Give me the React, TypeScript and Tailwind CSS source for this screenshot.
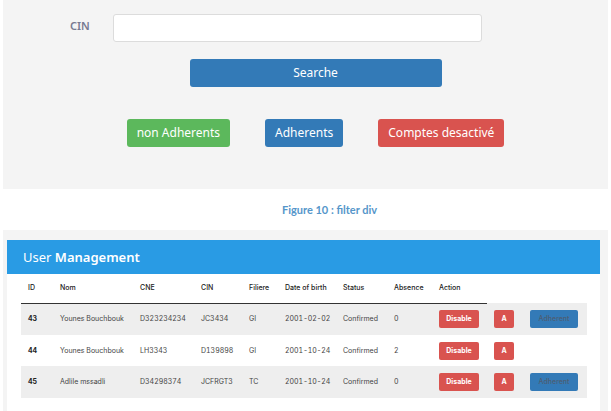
type User = {
  id: number;
  nom: string;
  cne: string;
  cin: string;
  filiere: string;
  birth: string;
  absence: number;
  adherent: boolean;
};

const users: User[] = [
  { id: 43, nom: "Younes Bouchbouk", cne: "D323234234", cin: "JC3434", filiere: "GI", birth: "2001-02-02", absence: 0, adherent: true },
  { id: 44, nom: "Younes Bouchbouk", cne: "LH3343", cin: "D139898", filiere: "GI", birth: "2001-10-24", absence: 2, adherent: false },
  { id: 45, nom: "Adlile mssadli", cne: "D34298374", cin: "JCFRGT3", filiere: "TC", birth: "2001-10-24", absence: 0, adherent: true },
];

const headings = ["ID", "Nom", "CNE", "CIN", "Filiere", "Date of birth", "Status", "Absence", "Action"];

const columns = [
  "w-[32px]", "w-[80px]", "w-[61px]", "w-[48px]", "w-[36px]", "w-[58px]",
  "w-[51px]", "w-[45px]", "w-[55px]", "w-[36px]", "w-[64px]",
];

const filterButton = "h-7 rounded-[3px] px-[10px] pb-px text-[12px] leading-5 text-white whitespace-nowrap";
const rowButton = "block h-[18px] rounded-[2px] text-[7px] leading-[18px]";

function FilterPanel() {
  return (
    <section className="bg-[#f4f4f4] px-5 pt-[14px] pb-[42px]">
      <form onSubmit={(e) => e.preventDefault()}>
        <div className="flex items-center pr-[106px] pl-[47px]">
          <label htmlFor="cin" className="w-[43px] pb-1 text-[11px] leading-4 font-semibold text-[#777a91]">
            CIN
          </label>
          <input
            id="cin"
            type="text"
            className="h-7 min-w-0 flex-1 rounded-[3px] border border-[#dcdcdc] bg-white px-2 text-[12px] outline-none"
          />
        </div>
        <div className="mt-[17px] flex justify-center pl-5">
          <button type="submit" className="h-7 w-[252px] rounded-[3px] bg-[#337ab7] pb-px text-[12px] leading-5 text-white">
            Searche
          </button>
        </div>
      </form>
      <div className="mt-8 flex justify-center gap-[35px] pl-5">
        <button type="button" className={`${filterButton} bg-[#5cb85c]`}>non Adherents</button>
        <button type="button" className={`${filterButton} bg-[#337ab7]`}>Adherents</button>
        <button type="button" className={`${filterButton} bg-[#d9534f]`}>Comptes desactivé</button>
      </div>
    </section>
  );
}

function UserTable() {
  return (
    <table className="w-full table-fixed border-collapse text-left font-[Inter,sans-serif] text-[7px] leading-3 whitespace-nowrap tabular-nums">
      <colgroup>
        {columns.map((width, i) => (
          <col key={i} className={width} />
        ))}
      </colgroup>
      <thead>
        <tr className="h-[29px] text-[#222]">
          {headings.map((heading) => (
            <th key={heading} scope="col" className="border-b border-[#333] px-[7px] font-medium">
              {heading}
            </th>
          ))}
        </tr>
      </thead>
      <tbody className="text-[#444]">
        {users.map((user) => (
          <tr key={user.id} className="h-8 odd:bg-[#eee] even:h-[31px]">
            <th scope="row" className="px-[7px] font-bold text-[#222]">{user.id}</th>
            <td className="px-[7px]">{user.nom}</td>
            <td className="px-[7px]">{user.cne}</td>
            <td className="px-[7px]">{user.cin}</td>
            <td className="px-[7px]">{user.filiere}</td>
            <td className="px-[7px]">{user.birth}</td>
            <td className="px-[7px]">Confirmed</td>
            <td className="px-[7px]">{user.absence}</td>
            <td className="px-[7px]">
              <button type="button" className={`${rowButton} w-10 bg-[#d9534f] font-bold text-white`}>Disable</button>
            </td>
            <td className="px-[7px]">
              <button type="button" className={`${rowButton} w-5 bg-[#d9534f] font-bold text-white`}>A</button>
            </td>
            <td className="px-[7px]">
              {user.adherent && (
                <button type="button" className={`${rowButton} w-12 bg-[#337ab7] font-medium text-[#4c5e74]`}>Adherent</button>
              )}
            </td>
          </tr>
        ))}
      </tbody>
    </table>
  );
}

export default function App() {
  return (
    <main className="min-h-screen bg-white px-[3px] font-['Noto_Sans',sans-serif]">
      <FilterPanel />
      <p className="pt-[13px] pb-3 pl-12 text-center font-[Lato,sans-serif] text-[11px] leading-4 font-bold text-[#5596ca]">
        Figure 10 : filter div
      </p>
      <section className="bg-[#f4f4f4] pt-[10px] pr-2 pl-1">
        <div className="bg-white pb-[14px]">
          <h2 className="bg-[#299be4] px-4 py-1 text-[13px] leading-[26px] text-white">
            User <span className="font-semibold">Management</span>
          </h2>
          <div className="px-[14px]">
            <UserTable />
          </div>
        </div>
      </section>
    </main>
  );
}
